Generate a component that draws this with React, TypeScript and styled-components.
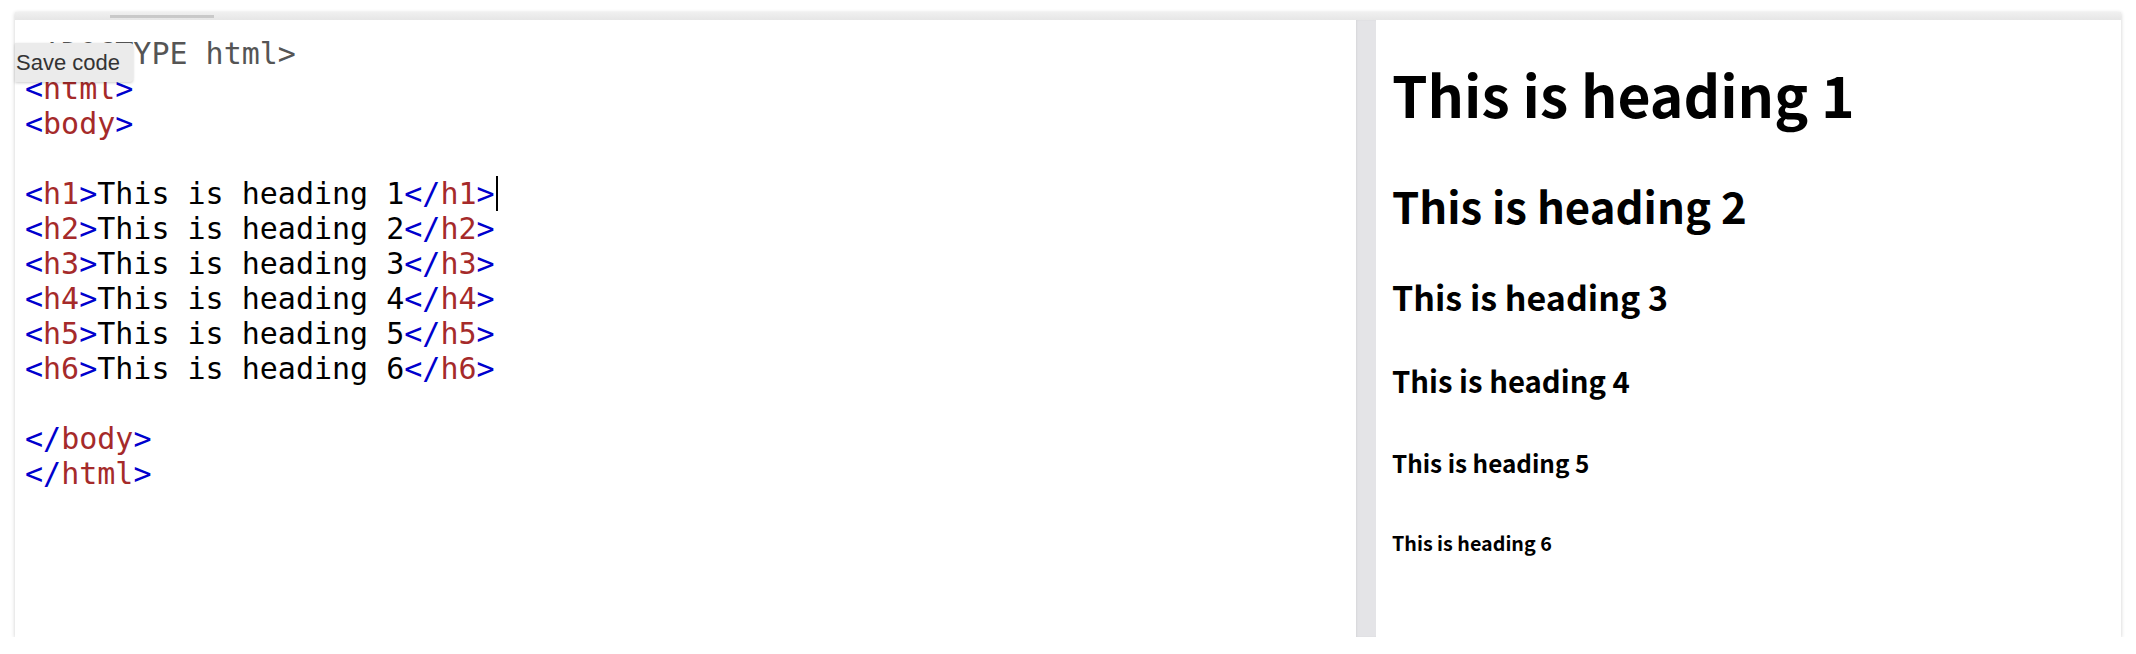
import * as React from 'react';
import styled, {createGlobalStyle} from 'styled-components';

const GlobalStyle = createGlobalStyle`
    html, body {
        margin: 0;
        padding: 0;
        background: #ffffff;
    }
`;

const Page = styled.div`
    padding: 12px 15px 0 15px;
`;

/* Outer editor frame with its soft shadow */
const Frame = styled.div`
    position: relative;
    width: 2106px;
    background: #ffffff;
    box-shadow: 0 1px 4px rgba(0, 0, 0, 0.2);
`;

const TopStrip = styled.div`
    height: 8px;
    background: linear-gradient(#f0f0f0, #e6e6e6);
    display: flex;
    align-items: center;
`;

const Handle = styled.div`
    margin-left: 95px;
    width: 104px;
    height: 3px;
    background: #c9c9c9;
`;

const Panes = styled.div`
    display: flex;
    height: 617px;
`;

const CodePane = styled.pre`
    margin: 0;
    width: 1341px;
    padding: 16px 10px 0 10px;
    box-sizing: border-box;
    font-family: "DejaVu Sans Mono", monospace;
    font-size: 30px;
    line-height: 35px;
    color: #000000;
`;

const Line = styled.div`
    height: 35px;
    white-space: pre;
`;

const Meta = styled.span`
    color: #555555;
`;

const Bracket = styled.span`
    color: #0000cd;
`;

const TagName = styled.span`
    color: #a52a2a;
`;

const Caret = styled.span`
    display: inline-block;
    width: 0;
    height: 35px;
    margin-left: 1px;
    border-left: 2px solid #000000;
    vertical-align: top;
`;

const Divider = styled.div`
    width: 20px;
    background: #e4e4e7;
    box-shadow: inset 1px 0 2px rgba(0, 0, 0, 0.06);
`;

const Preview = styled.div`
    flex: 1;
    display: flex;
    flex-direction: column;
    align-items: flex-start;
    padding: 0 16px;
    font-family: "Noto Sans CJK KR", "Noto Sans", sans-serif;
    font-weight: 700;
    color: #000000;
`;

const Heading = styled.div<{ $size: number; $top: number }>`
    font-size: ${p => p.$size}px;
    line-height: 1;
    margin-top: ${p => p.$top}px;
    white-space: nowrap;
`;

const Tooltip = styled.div`
    position: absolute;
    left: 0;
    top: 31px;
    height: 39px;
    padding: 0 13px 0 1px;
    display: flex;
    align-items: center;
    background: #ebebeb;
    border-radius: 0 3px 3px 0;
    box-shadow: 0 1px 3px rgba(0, 0, 0, 0.2);
    font-family: "Liberation Sans", Arial, sans-serif;
    font-size: 22px;
    color: #333333;
`;

const Tag = ({name, close}: { name: string; close?: boolean }) => (
    <>
        <Bracket>{close ? '</' : '<'}</Bracket>
        <TagName>{name}</TagName>
        <Bracket>&gt;</Bracket>
    </>
);

/* size and gap above each rendered heading */
const headings = [
    {tag: 'h1', size: 57, top: 45},
    {tag: 'h2', size: 43.7, top: 62},
    {tag: 'h3', size: 34, top: 52},
    {tag: 'h4', size: 29.3, top: 52},
    {tag: 'h5', size: 24.3, top: 56},
    {tag: 'h6', size: 19.7, top: 58},
];

export default function App() {
    return (
        <Page>
            <GlobalStyle/>
            <Frame>
                <TopStrip>
                    <Handle/>
                </TopStrip>

                <Panes>
                    <CodePane>
                        <Line><Meta>&lt;!DOCTYPE html&gt;</Meta></Line>
                        <Line><Tag name="html"/></Line>
                        <Line><Tag name="body"/></Line>
                        <Line> </Line>
                        {headings.map((h, i) => (
                            <Line key={h.tag}>
                                <Tag name={h.tag}/>This is heading {i + 1}<Tag name={h.tag} close/>
                                {i === 0 && <Caret/>}
                            </Line>
                        ))}
                        <Line> </Line>
                        <Line><Tag name="body" close/></Line>
                        <Line><Tag name="html" close/></Line>
                    </CodePane>

                    <Divider/>

                    <Preview>
                        {headings.map((h, i) => (
                            <Heading key={h.tag} $size={h.size} $top={h.top}>
                                This is heading {i + 1}
                            </Heading>
                        ))}
                    </Preview>
                </Panes>

                <Tooltip>Save code</Tooltip>
            </Frame>
        </Page>
    );
}
